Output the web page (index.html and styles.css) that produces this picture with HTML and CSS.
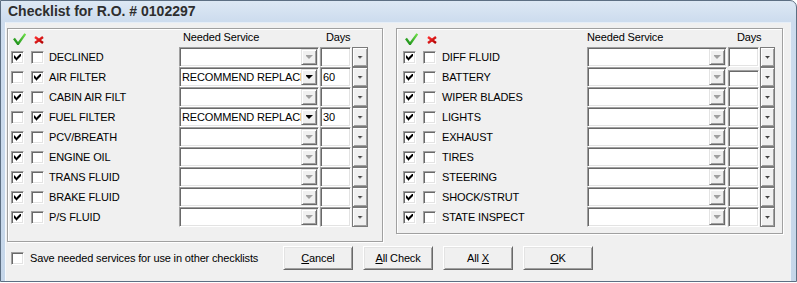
FILE: index.html
```html
<!DOCTYPE html>
<html>
<head>
<meta charset="utf-8">
<title>Checklist</title>
<link rel="stylesheet" href="styles.css">
</head>
<body>
<svg width="0" height="0" class="defs">
  <defs>
    <linearGradient id="gchk" x1="0" y1="1" x2="1" y2="0">
      <stop offset="0" stop-color="#168a16"/>
      <stop offset="1" stop-color="#6fe04a"/>
    </linearGradient>
    <linearGradient id="gx" x1="0" y1="0" x2="1" y2="1">
      <stop offset="0" stop-color="#ff3030"/>
      <stop offset="1" stop-color="#b00000"/>
    </linearGradient>
  </defs>
</svg>
<div class="window">
  <div class="titlebar">Checklist for R.O. # 0102297</div>
  <div class="client">
    <div class="groups">
      <div class="group left">
        <div class="hdr">
          <svg class="ic-check" width="13" height="12" viewBox="0 0 13 12"><path d="M1 5.5 L5 11 L12.3 0.8" fill="none" stroke="url(#gchk)" stroke-width="2.3" stroke-linejoin="round"/></svg>
          <svg class="ic-x" width="10" height="8" viewBox="0 0 10 8"><path d="M1 1 L9 7 M9 1 L1 7" fill="none" stroke="url(#gx)" stroke-width="2.4"/></svg>
          <span class="hd-text hd-svc">Needed Service</span>
          <span class="hd-text hd-days">Days</span>
        </div>
        <div class="row"><span class="cb on"></span><span class="cb"></span><span class="lbl">DECLINED</span><div class="combo"><span class="val"></span><span class="ddb"></span></div><div class="days"></div><div class="dbtn"></div></div>
        <div class="row"><span class="cb"></span><span class="cb on"></span><span class="lbl">AIR FILTER</span><div class="combo"><span class="val">RECOMMEND REPLACE</span><span class="ddb dark"></span></div><div class="days">60</div><div class="dbtn"></div></div>
        <div class="row"><span class="cb on"></span><span class="cb"></span><span class="lbl">CABIN AIR FILT</span><div class="combo"><span class="val"></span><span class="ddb"></span></div><div class="days"></div><div class="dbtn"></div></div>
        <div class="row"><span class="cb"></span><span class="cb on"></span><span class="lbl">FUEL FILTER</span><div class="combo"><span class="val">RECOMMEND REPLACE</span><span class="ddb dark"></span></div><div class="days">30</div><div class="dbtn"></div></div>
        <div class="row"><span class="cb on"></span><span class="cb"></span><span class="lbl">PCV/BREATH</span><div class="combo"><span class="val"></span><span class="ddb"></span></div><div class="days"></div><div class="dbtn"></div></div>
        <div class="row"><span class="cb on"></span><span class="cb"></span><span class="lbl">ENGINE OIL</span><div class="combo"><span class="val"></span><span class="ddb"></span></div><div class="days"></div><div class="dbtn"></div></div>
        <div class="row"><span class="cb on"></span><span class="cb"></span><span class="lbl">TRANS FLUID</span><div class="combo"><span class="val"></span><span class="ddb"></span></div><div class="days"></div><div class="dbtn"></div></div>
        <div class="row"><span class="cb on"></span><span class="cb"></span><span class="lbl">BRAKE FLUID</span><div class="combo"><span class="val"></span><span class="ddb"></span></div><div class="days"></div><div class="dbtn"></div></div>
        <div class="row"><span class="cb on"></span><span class="cb"></span><span class="lbl">P/S FLUID</span><div class="combo"><span class="val"></span><span class="ddb"></span></div><div class="days"></div><div class="dbtn"></div></div>
      </div>
      <div class="group right">
        <div class="hdr">
          <svg class="ic-check" width="13" height="12" viewBox="0 0 13 12"><path d="M1 5.5 L5 11 L12.3 0.8" fill="none" stroke="url(#gchk)" stroke-width="2.3" stroke-linejoin="round"/></svg>
          <svg class="ic-x" width="10" height="8" viewBox="0 0 10 8"><path d="M1 1 L9 7 M9 1 L1 7" fill="none" stroke="url(#gx)" stroke-width="2.4"/></svg>
          <span class="hd-text hd-svc">Needed Service</span>
          <span class="hd-text hd-days">Days</span>
        </div>
        <div class="row"><span class="cb on"></span><span class="cb"></span><span class="lbl">DIFF FLUID</span><div class="combo"><span class="val"></span><span class="ddb"></span></div><div class="days"></div><div class="dbtn"></div></div>
        <div class="row"><span class="cb on"></span><span class="cb"></span><span class="lbl">BATTERY</span><div class="combo"><span class="val"></span><span class="ddb"></span></div><div class="days low"></div><div class="dbtn"></div></div>
        <div class="row"><span class="cb on"></span><span class="cb"></span><span class="lbl">WIPER BLADES</span><div class="combo"><span class="val"></span><span class="ddb"></span></div><div class="days"></div><div class="dbtn"></div></div>
        <div class="row"><span class="cb on"></span><span class="cb"></span><span class="lbl">LIGHTS</span><div class="combo"><span class="val"></span><span class="ddb"></span></div><div class="days"></div><div class="dbtn"></div></div>
        <div class="row"><span class="cb on"></span><span class="cb"></span><span class="lbl">EXHAUST</span><div class="combo"><span class="val"></span><span class="ddb"></span></div><div class="days"></div><div class="dbtn"></div></div>
        <div class="row"><span class="cb on"></span><span class="cb"></span><span class="lbl">TIRES</span><div class="combo"><span class="val"></span><span class="ddb"></span></div><div class="days"></div><div class="dbtn"></div></div>
        <div class="row"><span class="cb on"></span><span class="cb"></span><span class="lbl">STEERING</span><div class="combo"><span class="val"></span><span class="ddb"></span></div><div class="days"></div><div class="dbtn"></div></div>
        <div class="row"><span class="cb on"></span><span class="cb"></span><span class="lbl">SHOCK/STRUT</span><div class="combo"><span class="val"></span><span class="ddb"></span></div><div class="days"></div><div class="dbtn"></div></div>
        <div class="row"><span class="cb on"></span><span class="cb"></span><span class="lbl">STATE INSPECT</span><div class="combo"><span class="val"></span><span class="ddb"></span></div><div class="days"></div><div class="dbtn"></div></div>
      </div>
    </div>
    <div class="footer">
      <div class="save"><span class="cb"></span><span>Save needed services for use in other checklists</span></div>
      <div class="btn"><span><u>C</u>ancel</span></div>
      <div class="btn"><span><u>A</u>ll Check</span></div>
      <div class="btn"><span>All <u>X</u></span></div>
      <div class="btn"><span><u>O</u>K</span></div>
    </div>
  </div>
</div>
</body>
</html>
```
FILE: styles.css
```css
html, body {
  margin: 0;
  padding: 0;
  background: #ffffff;
}
body {
  font-family: "Liberation Sans", Arial, sans-serif;
  font-size: 11px;
  letter-spacing: -0.15px;
  color: #000;
}
.defs {
  position: absolute;
  width: 0;
  height: 0;
}
.window {
  box-sizing: border-box;
  width: 797px;
  height: 282px;
  border: 1px solid #5d6f83;
  border-top-right-radius: 7px;
  background: linear-gradient(#dde8f4, #cddcee 20px, #c5d6e9);
  padding: 0 5px 0 4px;
  display: flex;
  flex-direction: column;
}
.titlebar {
  height: 21px;
  line-height: 21px;
  padding-left: 3px;
  font-weight: bold;
  font-size: 14px;
  letter-spacing: 0;
  color: #2e2e2e;
  white-space: nowrap;
}
.client {
  flex: 1;
  background: #f0f0f0;
  border-top: 1px solid #e6eef7;
  border-left: 1px solid #f7fafd;
  border-right: 1px solid #eef3f9;
  display: flex;
  flex-direction: column;
}
.groups {
  display: flex;
  align-items: flex-start;
  margin-top: 5px;
  padding-left: 1px;
}
.group {
  box-sizing: border-box;
  border: 1px solid #a0a0a0;
  box-shadow: 1px 1px 0 #fff, inset 1px 1px 0 #fff;
}
.group.left {
  width: 376px;
  height: 214px;
  padding-left: 3px;
}
.group.right {
  width: 387px;
  height: 206px;
  margin-left: 13px;
  padding-left: 6px;
}
.hdr, .row {
  display: grid;
}
.left .hdr, .left .row {
  grid-template-columns: 20px 18px 130px 140px 32px 17px;
}
.right .hdr, .right .row {
  grid-template-columns: 20px 19px 145px 140px 32px 16px;
}
.hdr {
  height: 18px;
  align-items: start;
}
.ic-check {
  grid-column: 1;
  margin: 4px 0 0 2px;
}
.ic-x {
  grid-column: 2;
  margin: 7px 0 0 3px;
}
.right .ic-x {
  margin-left: 4px;
}
.hd-text {
  margin-top: 2px;
  line-height: 13px;
  white-space: nowrap;
}
.hd-svc {
  grid-column: 4;
  padding-left: 4px;
}
.right .hd-svc {
  padding-left: 0;
}
.hd-days {
  grid-column: 5 / span 2;
  padding-left: 7px;
}
.right .hd-days {
  padding-left: 10px;
}
.row {
  height: 20px;
  align-items: center;
}
.lbl {
  white-space: nowrap;
}
.cb {
  box-sizing: border-box;
  width: 13px;
  height: 13px;
  border: 1px solid;
  border-color: #a0a0a0 #fff #fff #a0a0a0;
  background: #fff;
  box-shadow: inset 1px 1px 0 #696969, inset -1px -1px 0 #e3e3e3;
  display: flex;
  align-items: center;
  justify-content: center;
  flex: none;
}
.cb.on::after {
  content: "";
  width: 7px;
  height: 7px;
  background: #000;
  clip-path: polygon(0 2px, 1px 2px, 1px 3px, 2px 3px, 2px 4px, 3px 4px, 3px 3px, 4px 3px, 4px 2px, 5px 2px, 5px 1px, 6px 1px, 6px 0, 7px 0, 7px 3px, 6px 3px, 6px 4px, 5px 4px, 5px 5px, 4px 5px, 4px 6px, 3px 6px, 3px 7px, 2px 7px, 2px 6px, 1px 6px, 1px 5px, 0 5px);
}
.combo, .days {
  box-sizing: border-box;
  height: 20px;
  border: 1px solid;
  border-color: #a0a0a0 #fff #fff #a0a0a0;
  background: #fff;
  box-shadow: inset 1px 1px 0 #696969, inset -1px -1px 0 #e3e3e3;
  padding: 1px;
}
.combo {
  width: 140px;
  display: flex;
}
.val {
  flex: 1;
  min-width: 0;
  overflow: hidden;
  white-space: nowrap;
  line-height: 16px;
  padding-left: 1px;
}
.ddb {
  box-sizing: border-box;
  width: 16px;
  height: 16px;
  flex: none;
  background: #f0f0f0;
  border: 1px solid;
  border-color: #e3e3e3 #696969 #696969 #e3e3e3;
  box-shadow: inset 1px 1px 0 #fff, inset -1px -1px 0 #a0a0a0;
  display: flex;
  align-items: center;
  justify-content: center;
}
.ddb::after {
  content: "";
  width: 7px;
  height: 4px;
  background: #a0a0a0;
  clip-path: polygon(0 0, 7px 0, 7px 1px, 6px 1px, 6px 2px, 5px 2px, 5px 3px, 4px 3px, 4px 4px, 3px 4px, 3px 3px, 2px 3px, 2px 2px, 1px 2px, 1px 1px, 0 1px);
}
.ddb.dark::after {
  background: #000;
}
.days {
  width: 31px;
  justify-self: end;
  line-height: 16px;
  padding-left: 2px;
}
.days.low {
  height: 17px;
  align-self: end;
}
.dbtn {
  box-sizing: border-box;
  width: 16px;
  height: 20px;
  justify-self: end;
  background: #f0f0f0;
  border: 1px solid #7a7a7a;
  box-shadow: inset 1px 1px 0 #fff, inset -1px -1px 0 #a0a0a0;
  display: flex;
  align-items: center;
  justify-content: center;
}
.right .dbtn {
  width: 15px;
}
.dbtn::after {
  content: "";
  width: 5px;
  height: 3px;
  background: #404040;
  clip-path: polygon(0 0, 5px 0, 5px 1px, 4px 1px, 4px 2px, 3px 2px, 3px 3px, 2px 3px, 2px 2px, 1px 2px, 1px 1px, 0 1px);
}
.footer {
  display: flex;
  align-items: center;
  margin-top: 4px;
  height: 24px;
}
.save {
  box-sizing: border-box;
  width: 277px;
  padding-left: 5px;
  display: flex;
  align-items: center;
  gap: 6px;
  white-space: nowrap;
}
.btn {
  box-sizing: border-box;
  width: 70px;
  height: 24px;
  margin-right: 10px;
  background: #f0f0f0;
  border: 1px solid;
  border-color: #fff #696969 #696969 #fff;
  box-shadow: inset 1px 1px 0 #e3e3e3, inset -1px -1px 0 #a0a0a0;
  display: flex;
  align-items: center;
  justify-content: center;
  white-space: nowrap;
}
```
